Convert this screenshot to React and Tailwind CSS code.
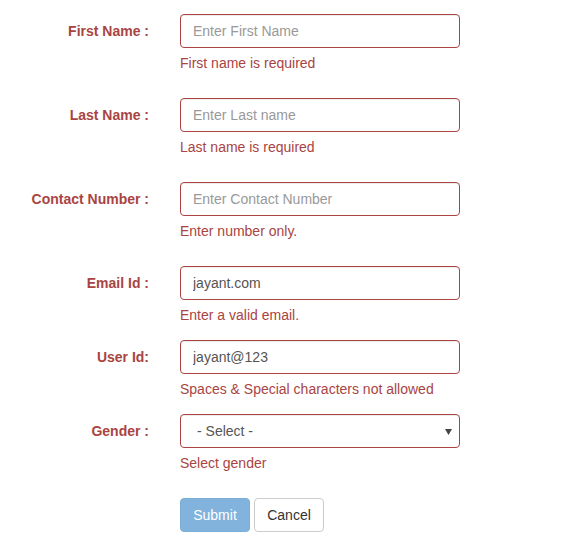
import React from "react";

const font = { fontFamily: '"Liberation Sans", Arial, sans-serif' };

function Row({ label, children, help, helpMb = true }) {
  return (
    <div className="flex mb-[15px]">
      <div className="w-[165px] pr-[16px] pt-[7px] text-right text-[14px] leading-[20px] font-bold text-[#a94442]">
        {label}
      </div>
      <div className="w-[310px] px-[15px]">
        {children}
        {help && (
          <div className={`mt-[5px] ${helpMb ? "mb-[10px]" : ""} text-[14px] leading-[20px] text-[#a94442]`}>
            {help}
          </div>
        )}
      </div>
    </div>
  );
}

const inputCls =
  "block w-[280px] h-[34px] px-[12px] py-[6px] text-[14px] leading-[20px] text-[#555] bg-white border border-[#a94442] rounded-[4px] outline-none placeholder:text-[#999] shadow-[inset_0_1px_1px_rgba(0,0,0,0.075)]";

export default function App() {
  return (
    <div className="w-[574px] h-[554px] bg-white pt-[14px]" style={font}>
      <Row label="First Name :" help="First name is required">
        <input className={inputCls} style={font} placeholder="Enter First Name" />
      </Row>
      <Row label="Last Name :" help="Last name is required">
        <input className={inputCls} style={font} placeholder="Enter Last name" />
      </Row>
      <Row label="Contact Number :" help="Enter number only.">
        <input className={inputCls} style={font} placeholder="Enter Contact Number" />
      </Row>
      <Row label="Email Id :" help="Enter a valid email." helpMb={false}>
        <input className={inputCls} style={font} defaultValue="jayant.com" />
      </Row>
      <Row label="User Id:" help="Spaces & Special characters not allowed" helpMb={false}>
        <input className={inputCls} style={font} defaultValue="jayant@123" />
      </Row>
      <Row label="Gender :" help="Select gender">
        <div className="relative w-[280px] h-[34px] border border-[#a94442] rounded-[4px] bg-white shadow-[inset_0_1px_1px_rgba(0,0,0,0.075)]">
          <div className="pl-[16px] pt-[6px] text-[14px] leading-[20px] text-[#555]">- Select -</div>
          <svg className="absolute right-[7px] top-[14px]" width="7" height="6" viewBox="0 0 7 6">
            <path d="M0 0 H7 L3.5 6 Z" fill="#444" />
          </svg>
        </div>
      </Row>
      <div className="flex">
        <div className="w-[165px]" />
        <div className="flex gap-[4px] px-[15px]">
          <button
            className="w-[70px] h-[34px] rounded-[4px] bg-[#81b3dd] border border-[#7aaed8] text-white text-[14px] leading-[20px]"
            style={font}
          >
            Submit
          </button>
          <button
            className="w-[70px] h-[34px] rounded-[4px] bg-white border border-[#ccc] text-[#333] text-[14px] leading-[20px]"
            style={font}
          >
            Cancel
          </button>
        </div>
      </div>
    </div>
  );
}
